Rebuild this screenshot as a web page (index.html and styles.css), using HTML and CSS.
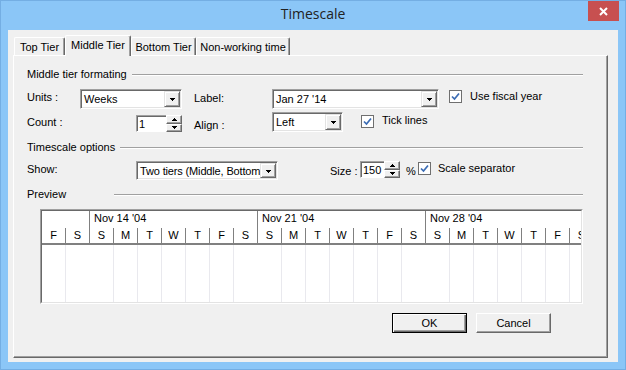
FILE: index.html
```html
<!DOCTYPE html>
<html>
<head>
<meta charset="utf-8">
<title>Timescale</title>
<link rel="stylesheet" href="styles.css">
</head>
<body>
<div class="window">
  <div class="titlebar">
    <div class="title">Timescale</div>
    <div class="close"><svg width="9" height="9" viewBox="0 0 9 9"><path d="M1 1L8 8M8 1L1 8" stroke="#fff" stroke-width="2" fill="none"/></svg></div>
  </div>
  <div class="client">
    <div class="tabs">
      <div class="tab t1">Top Tier</div>
      <div class="tab t2 sel">Middle Tier</div>
      <div class="tab t3">Bottom Tier</div>
      <div class="tab t4">Non-working time</div>
    </div>
    <div class="panel">
      <div class="sect"><span class="sl s1">Middle tier formating</span><i class="rule"></i></div>

      <div class="row r1">
        <span class="lbl l-units">Units :</span>
        <div class="combo c-units"><span class="val">Weeks</span><span class="ddb"><svg width="5" height="3" viewBox="0 0 5 3"><path d="M0 0h5v1h-1v1h-1v1h-1v-1h-1v-1h-1z" fill="#000"/></svg></span></div>
        <span class="lbl l-label">Label:</span>
        <div class="combo c-label"><span class="val">Jan 27 '14</span><span class="ddb"><svg width="5" height="3" viewBox="0 0 5 3"><path d="M0 0h5v1h-1v1h-1v1h-1v-1h-1v-1h-1z" fill="#000"/></svg></span></div>
        <svg class="chk k-fiscal" width="13" height="13" viewBox="0 0 13 13"><rect x="0.5" y="0.5" width="12" height="12" fill="#fff" stroke="#6f6f6f"/><path d="M3 6.5L5.5 9L10 3.5" fill="none" stroke="#3b6cb4" stroke-width="1.7"/></svg>
        <span class="lbl t-fiscal">Use fiscal year</span>
      </div>

      <div class="row r2">
        <span class="lbl l-count">Count :</span>
        <div class="spin s-count"><span class="spin-f">1</span><span class="spin-b"><span class="sb"><svg width="5" height="3" viewBox="0 0 5 3"><path d="M2 0h1v1h1v1h1v1h-5v-1h1v-1h1z" fill="#000"/></svg></span><span class="sb"><svg width="5" height="3" viewBox="0 0 5 3"><path d="M0 0h5v1h-1v1h-1v1h-1v-1h-1v-1h-1z" fill="#000"/></svg></span></span></div>
        <span class="lbl l-align">Align :</span>
        <div class="combo c-align"><span class="val">Left</span><span class="ddb"><svg width="5" height="3" viewBox="0 0 5 3"><path d="M0 0h5v1h-1v1h-1v1h-1v-1h-1v-1h-1z" fill="#000"/></svg></span></div>
        <svg class="chk k-tick" width="13" height="13" viewBox="0 0 13 13"><rect x="0.5" y="0.5" width="12" height="12" fill="#fff" stroke="#6f6f6f"/><path d="M3 6.5L5.5 9L10 3.5" fill="none" stroke="#3b6cb4" stroke-width="1.7"/></svg>
        <span class="lbl t-tick">Tick lines</span>
      </div>

      <div class="sect sect2"><span class="sl s2">Timescale options</span><i class="rule"></i></div>

      <div class="row r3">
        <span class="lbl l-show">Show:</span>
        <div class="combo c-show"><span class="val tight">Two tiers (Middle, Bottom)</span><span class="ddb"><svg width="5" height="3" viewBox="0 0 5 3"><path d="M0 0h5v1h-1v1h-1v1h-1v-1h-1v-1h-1z" fill="#000"/></svg></span></div>
        <span class="lbl l-size">Size :</span>
        <div class="spin s-size"><span class="spin-f">150</span><span class="spin-b"><span class="sb"><svg width="5" height="3" viewBox="0 0 5 3"><path d="M2 0h1v1h1v1h1v1h-5v-1h1v-1h1z" fill="#000"/></svg></span><span class="sb"><svg width="5" height="3" viewBox="0 0 5 3"><path d="M0 0h5v1h-1v1h-1v1h-1v-1h-1v-1h-1z" fill="#000"/></svg></span></span></div>
        <span class="lbl l-pct">%</span>
        <svg class="chk k-sep" width="13" height="13" viewBox="0 0 13 13"><rect x="0.5" y="0.5" width="12" height="12" fill="#fff" stroke="#6f6f6f"/><path d="M3 6.5L5.5 9L10 3.5" fill="none" stroke="#3b6cb4" stroke-width="1.7"/></svg>
        <span class="lbl t-sep">Scale separator</span>
      </div>

      <div class="sect sect3"><span class="sl s3">Preview</span><i class="rule"></i></div>

      <div class="tl">
        <div class="tl-in">
          <div class="wk g0">
            <div class="wk-date"></div>
            <div class="wk-days"><span class="d">F</span><span class="d">S</span></div>
            <div class="wk-body"><span class="b"></span><span class="b"></span></div>
          </div>
          <div class="wk">
            <div class="wk-date">Nov 14 '04</div>
            <div class="wk-days"><span class="d">S</span><span class="d">M</span><span class="d">T</span><span class="d">W</span><span class="d">T</span><span class="d">F</span><span class="d">S</span></div>
            <div class="wk-body"><span class="b"></span><span class="b"></span><span class="b"></span><span class="b"></span><span class="b"></span><span class="b"></span><span class="b"></span></div>
          </div>
          <div class="wk">
            <div class="wk-date">Nov 21 '04</div>
            <div class="wk-days"><span class="d">S</span><span class="d">M</span><span class="d">T</span><span class="d">W</span><span class="d">T</span><span class="d">F</span><span class="d">S</span></div>
            <div class="wk-body"><span class="b"></span><span class="b"></span><span class="b"></span><span class="b"></span><span class="b"></span><span class="b"></span><span class="b"></span></div>
          </div>
          <div class="wk">
            <div class="wk-date">Nov 28 '04</div>
            <div class="wk-days"><span class="d">S</span><span class="d">M</span><span class="d">T</span><span class="d">W</span><span class="d">T</span><span class="d">F</span><span class="d">S</span></div>
            <div class="wk-body"><span class="b"></span><span class="b"></span><span class="b"></span><span class="b"></span><span class="b"></span><span class="b"></span><span class="b"></span></div>
          </div>
        </div>
      </div>

      <div class="btns">
        <div class="btn def">OK</div>
        <div class="btn">Cancel</div>
      </div>
    </div>
  </div>
</div>
</body>
</html>
```
FILE: styles.css
```css
* { box-sizing: border-box; margin: 0; padding: 0; }
html, body { width: 626px; height: 370px; overflow: hidden; }
body {
  font-family: "Liberation Sans", Arial, sans-serif;
  font-size: 11px;
  color: #000;
  background: #8bc6f7;
}
.window {
  width: 626px;
  height: 370px;
  background: #8bc6f7;
  border: 1px solid #74aee3;
  display: flex;
  flex-direction: column;
}
.titlebar {
  flex: none;
  height: 29px;
  display: grid;
  grid-template-columns: 1fr auto 1fr;
}
.title {
  grid-column: 2;
  align-self: center;
  font-family: "Open Sans", "Noto Sans", sans-serif;
  font-size: 14px;
  line-height: 18px;
  color: #222;
  padding-bottom: 3px;
}
.close {
  grid-column: 3;
  justify-self: end;
  align-self: start;
  width: 31px;
  height: 20px;
  margin-right: 6px;
  background: #c75050;
  display: flex;
  align-items: center;
  justify-content: center;
}
.client {
  flex: none;
  margin: 0 7px;
  height: 332px;
  background: #f0f0f0;
  padding: 5px 10px 0 5px;
}
.tabs {
  display: flex;
  align-items: flex-end;
  height: 20px;
  padding-left: 1px;
}
.tab {
  flex: none;
  height: 18px;
  background: #f0f0f0;
  border-top: 1px solid #fff;
  border-left: 1px solid #fff;
  border-right: 1px solid #696969;
  box-shadow: inset -1px 0 0 #a0a0a0;
  border-radius: 2px 2px 0 0;
  display: flex;
  align-items: center;
  justify-content: center;
  line-height: 14px;
  white-space: nowrap;
}
.t1 { width: 51px; }
.t2 { width: 66px; }
.t3 { width: 65px; }
.t4 { width: 94px; }
.tab.sel {
  height: 21px;
  margin-bottom: -1px;
  z-index: 1;
  padding-bottom: 2px;
}
.panel {
  height: 303px;
  border: 1px solid;
  border-color: #fff #696969 #696969 #fff;
  box-shadow: inset -1px -1px 0 #a0a0a0;
  padding: 11px 24px 0 13px;
}
.sect {
  display: flex;
  align-items: flex-start;
  height: 14px;
  line-height: 14px;
}
.sect2 { margin-top: 8px; }
.sect3 { margin-top: 6px; }
.sl { flex: none; white-space: nowrap; }
.s1 { width: 105px; }
.s2 { width: 93px; }
.s3 { width: 87px; }
.rule {
  flex: 1;
  height: 2px;
  margin-top: 7px;
  border-top: 1px solid #a0a0a0;
  border-bottom: 1px solid #fff;
}
.row {
  display: flex;
  align-items: flex-start;
  height: 20px;
}
.r1 { margin-top: 8px; }
.r2 { margin-top: 3px; }
.r3 { margin-top: 7px; }
.lbl {
  flex: none;
  line-height: 14px;
  white-space: nowrap;
}
.combo {
  flex: none;
  height: 20px;
  display: flex;
  align-items: center;
  background: #fff;
  border: 1px solid;
  border-color: #a0a0a0 #fff #fff #a0a0a0;
  box-shadow: inset 1px 1px 0 #696969, inset -1px -1px 0 #e3e3e3;
  padding: 1px;
  overflow: hidden;
}
.val {
  flex: 1;
  min-width: 0;
  padding-left: 2px;
  line-height: 14px;
  white-space: nowrap;
  overflow: hidden;
}
.tight { letter-spacing: -0.15px; }
.ddb {
  flex: none;
  width: 16px;
  height: 16px;
  background: #f0f0f0;
  border: 1px solid;
  border-color: #e3e3e3 #696969 #696969 #e3e3e3;
  box-shadow: inset 1px 1px 0 #fff, inset -1px -1px 0 #a0a0a0;
  display: flex;
  align-items: center;
  justify-content: center;
}
.ddb svg { display: block; margin-top: 1px; }
.spin {
  flex: none;
  display: flex;
  height: 17px;
}
.spin-f {
  flex: 1;
  background: #fff;
  border-top: 1px solid #a0a0a0;
  border-left: 1px solid #a0a0a0;
  border-bottom: 1px solid #fff;
  box-shadow: inset 1px 1px 0 #696969;
  padding-left: 2px;
  padding-top: 1px;
  line-height: 14px;
}
.spin-b {
  flex: none;
  width: 16px;
  display: flex;
  flex-direction: column;
}
.sb {
  flex: 1;
  background: #f0f0f0;
  border: 1px solid;
  border-color: #fff #696969 #696969 #fff;
  box-shadow: inset -1px -1px 0 #a0a0a0;
  display: flex;
  align-items: center;
  justify-content: center;
}
.sb svg { display: block; }
.chk { flex: none; display: block; }

/* row 1 */
.l-units { width: 53px; margin-top: 1px; }
.c-units { width: 102px; }
.l-label { width: 78px; margin-left: 12px; margin-top: 2px; }
.c-label { width: 167px; }
.k-fiscal { margin-left: 10px; margin-top: 1px; }
.t-fiscal { margin-left: 8px; margin-top: 0; }

/* row 2 */
.l-count { width: 109px; margin-top: 3px; }
.s-count { width: 46px; margin-top: 3px; }
.l-align { width: 78px; margin-left: 12px; margin-top: 6px; }
.c-align { width: 71px; }
.k-tick { margin-left: 18px; margin-top: 3px; }
.t-tick { margin-left: 8px; margin-top: 1px; }

/* row 3 */
.l-show { width: 109px; margin-top: 1px; }
.c-show { width: 142px; height: 19px; }
.c-show .ddb { height: 15px; }
.l-size { width: 30px; margin-left: 52px; margin-top: 3px; }
.s-size { width: 40px; }
.l-pct { width: 12px; margin-left: 6px; margin-top: 3px; }
.k-sep { margin-top: 1px; }
.t-sep { margin-left: 7px; margin-top: 0; }

/* preview timeline */
.tl {
  margin-left: 13px;
  margin-top: 8px;
  height: 95px;
  border: 1px solid;
  border-color: #a0a0a0 #fff #fff #a0a0a0;
}
.tl-in {
  height: 93px;
  border: 1px solid;
  border-color: #696969 #e3e3e3 #e3e3e3 #696969;
  background: #fff;
  display: flex;
  overflow: hidden;
}
.wk {
  flex: none;
  display: flex;
  flex-direction: column;
}
.wk-date {
  height: 17px;
  line-height: 14px;
  padding-left: 4px;
  border-left: 1px solid #808080;
  white-space: nowrap;
}
.wk-days {
  height: 17px;
  display: flex;
  border-left: 1px solid #808080;
  border-bottom: 2px solid #808080;
}
.wk-body {
  height: 57px;
  display: flex;
  border-left: 1px solid #fff;
}
.g0 .wk-date, .g0 .wk-days, .g0 .wk-body { border-left: none; }
.d {
  flex: none;
  width: 24px;
  border-left: 1px solid #808080;
  text-align: center;
  line-height: 15px;
}
.d:first-child { width: 23px; border-left: none; }
.b {
  flex: none;
  width: 24px;
  border-left: 1px solid #e9e9ee;
}
.b:first-child { width: 23px; border-left: none; }

.btns {
  display: flex;
  justify-content: flex-end;
  gap: 9px;
  margin-top: 9px;
  margin-right: 32px;
}
.btn {
  flex: none;
  width: 75px;
  height: 20px;
  background: #f0f0f0;
  border: 1px solid;
  border-color: #fff #696969 #696969 #fff;
  box-shadow: inset -1px -1px 0 #a0a0a0;
  display: flex;
  align-items: center;
  justify-content: center;
  line-height: 14px;
}
.btn.def {
  border-color: #000;
  box-shadow: inset 1px 1px 0 #fff, inset -1px -1px 0 #696969, inset -2px -2px 0 #a0a0a0;
}
```
